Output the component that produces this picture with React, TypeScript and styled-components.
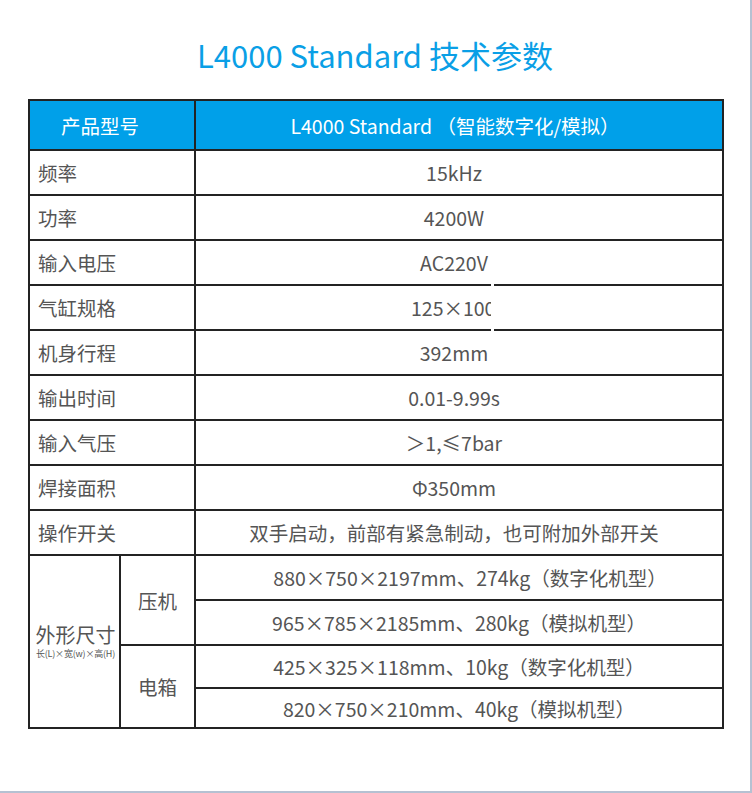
import React from "react";
import styled, { createGlobalStyle } from "styled-components";

const GlobalStyle = createGlobalStyle`
  html, body {
    margin: 0;
    padding: 0;
    background: #ffffff;
  }
  body {
    font-family: "Noto Sans CJK SC", "Noto Sans", sans-serif;
  }
`;

const Page = styled.div`
  box-sizing: border-box;
  width: 752px;
  height: 793px;
  padding-top: 35px;
  border-right: 2px solid #b5c1d2;
  border-bottom: 2px solid #b5c1d2;
  display: flex;
  flex-direction: column;
  align-items: flex-start;
  background: #ffffff;
`;

const Title = styled.h1`
  align-self: center;
  margin: 0;
  font-size: 31px;
  line-height: 40px;
  font-weight: 400;
  color: #0a9fe6;
`;

const Table = styled.div`
  margin: 24px 0 0 28px;
  width: 696px;
  box-sizing: border-box;
  padding: 2px;
  background: #232323;
  display: grid;
  grid-template-columns: 89px 73px 526px;
  grid-template-rows: 48px repeat(9, 43px) 43px 43px 41px 38px;
  gap: 2px;
`;

const Cell = styled.div`
  background: #ffffff;
  color: #555555;
  font-size: 19.5px;
  display: flex;
  align-items: center;
  white-space: nowrap;
`;

const HeadLabel = styled(Cell)`
  grid-column: 1 / span 2;
  background: #00a0e9;
  color: #ffffff;
  padding-left: 31px;
`;

const HeadValue = styled(Cell)`
  background: #00a0e9;
  color: #ffffff;
  justify-content: center;
  padding-right: 8px;
`;

const LabelCell = styled(Cell)`
  grid-column: 1 / span 2;
  padding-left: 8px;
`;

const ValueCell = styled(Cell)`
  position: relative;
  justify-content: center;
  padding-right: 10px;
`;

const DimValue = styled(Cell)<{ $shift?: number }>`
  justify-content: center;
  padding-left: ${(p) => p.$shift ?? 0}px;
`;

const GroupCell = styled(Cell)`
  grid-column: 1;
  grid-row: span 4;
  flex-direction: column;
  justify-content: center;
  padding-bottom: 2px;
  padding-left: 2px;
`;

const GroupName = styled.span`
  font-size: 20px;
  line-height: 26px;
`;

const GroupNote = styled.span`
  font-size: 9px;
  line-height: 12px;
  letter-spacing: -0.2px;
`;

const SubGroupCell = styled(Cell)`
  grid-column: 2;
  grid-row: span 2;
  justify-content: center;
`;

const ClipText = styled.span`
  display: inline-block;
  width: 80px;
  margin-right: 6px;
  overflow: hidden;
`;

const LineGap = styled.span`
  position: absolute;
  left: 295px;
  top: -2px;
  bottom: -2px;
  width: 3px;
  background: #ffffff;
`;

type Row = { label: string; value: string; clip?: boolean };

const rows: Row[] = [
  { label: "频率", value: "15kHz" },
  { label: "功率", value: "4200W" },
  { label: "输入电压", value: "AC220V" },
  { label: "气缸规格", value: "125×100", clip: true },
  { label: "机身行程", value: "392mm" },
  { label: "输出时间", value: "0.01-9.99s" },
  { label: "输入气压", value: "＞1,≤7bar" },
  { label: "焊接面积", value: "Φ350mm" },
  { label: "操作开关", value: "双手启动，前部有紧急制动，也可附加外部开关" },
];

export default function App() {
  return (
    <>
      <GlobalStyle />
      <Page>
        <Title>L4000 Standard 技术参数</Title>
        <Table>
          <HeadLabel>产品型号</HeadLabel>
          <HeadValue>L4000 Standard （智能数字化/模拟）</HeadValue>
          {rows.map((r) => (
            <React.Fragment key={r.label}>
              <LabelCell>{r.label}</LabelCell>
              <ValueCell>
                {r.clip ? (
                  <>
                    <ClipText>{r.value}</ClipText>
                    <LineGap />
                  </>
                ) : (
                  r.value
                )}
              </ValueCell>
            </React.Fragment>
          ))}
          <GroupCell>
            <GroupName>外形尺寸</GroupName>
            <GroupNote>长(L)×宽(w)×高(H)</GroupNote>
          </GroupCell>
          <SubGroupCell>压机</SubGroupCell>
          <DimValue $shift={22}>880×750×2197mm、274kg（数字化机型）</DimValue>
          <DimValue>965×785×2185mm、280kg（模拟机型）</DimValue>
          <SubGroupCell>电箱</SubGroupCell>
          <DimValue>425×325×118mm、10kg（数字化机型）</DimValue>
          <DimValue>820×750×210mm、40kg（模拟机型）</DimValue>
        </Table>
      </Page>
    </>
  );
}
